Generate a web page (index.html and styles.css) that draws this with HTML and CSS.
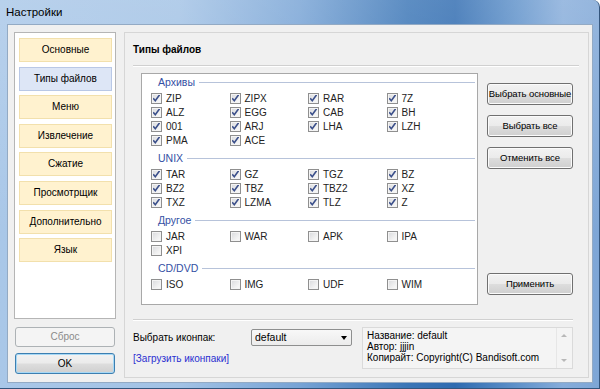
FILE: index.html
```html
<!DOCTYPE html>
<html lang="ru">
<head>
  <meta charset="UTF-8">
  <title>Настройки</title>
  <link rel="stylesheet" href="styles.css">
</head>
<body>
  <div class="window">
    <div class="titlebar">Настройки</div>

    <div class="client">
      <!-- Колонка навигации -->
      <aside class="sidebar">
        <nav class="nav">
          <div class="nav-item">Основные</div>
          <div class="nav-item active">Типы файлов</div>
          <div class="nav-item">Меню</div>
          <div class="nav-item">Извлечение</div>
          <div class="nav-item">Сжатие</div>
          <div class="nav-item">Просмотрщик</div>
          <div class="nav-item">Дополнительно</div>
          <div class="nav-item">Язык</div>
        </nav>
        <div class="btn btn-side disabled">Сброс</div>
        <div class="btn btn-side default">OK</div>
      </aside>

      <!-- Основная панель -->
      <section class="panel">
        <h2 class="panel-title">Типы файлов</h2>
        <div class="sep sep-top"></div>

        <div class="content">
          <div class="types">
            <div class="group">
              <div class="group-head"><span>Архивы</span></div>
              <div class="grid">
                <label class="cb on"><i></i>ZIP</label>
                <label class="cb on"><i></i>ZIPX</label>
                <label class="cb on"><i></i>RAR</label>
                <label class="cb on"><i></i>7Z</label>
                <label class="cb on"><i></i>ALZ</label>
                <label class="cb on"><i></i>EGG</label>
                <label class="cb on"><i></i>CAB</label>
                <label class="cb on"><i></i>BH</label>
                <label class="cb on"><i></i>001</label>
                <label class="cb on"><i></i>ARJ</label>
                <label class="cb on"><i></i>LHA</label>
                <label class="cb on"><i></i>LZH</label>
                <label class="cb on"><i></i>PMA</label>
                <label class="cb on"><i></i>ACE</label>
              </div>
            </div>

            <div class="group">
              <div class="group-head"><span>UNIX</span></div>
              <div class="grid">
                <label class="cb on"><i></i>TAR</label>
                <label class="cb on"><i></i>GZ</label>
                <label class="cb on"><i></i>TGZ</label>
                <label class="cb on"><i></i>BZ</label>
                <label class="cb on"><i></i>BZ2</label>
                <label class="cb on"><i></i>TBZ</label>
                <label class="cb on"><i></i>TBZ2</label>
                <label class="cb on"><i></i>XZ</label>
                <label class="cb on"><i></i>TXZ</label>
                <label class="cb on"><i></i>LZMA</label>
                <label class="cb on"><i></i>TLZ</label>
                <label class="cb on"><i></i>Z</label>
              </div>
            </div>

            <div class="group">
              <div class="group-head"><span>Другое</span></div>
              <div class="grid">
                <label class="cb"><i></i>JAR</label>
                <label class="cb"><i></i>WAR</label>
                <label class="cb"><i></i>APK</label>
                <label class="cb"><i></i>IPA</label>
                <label class="cb"><i></i>XPI</label>
              </div>
            </div>

            <div class="group">
              <div class="group-head"><span>CD/DVD</span></div>
              <div class="grid">
                <label class="cb"><i></i>ISO</label>
                <label class="cb"><i></i>IMG</label>
                <label class="cb"><i></i>UDF</label>
                <label class="cb"><i></i>WIM</label>
              </div>
            </div>
          </div>

          <div class="actions">
            <div class="btn">Выбрать основные</div>
            <div class="btn">Выбрать все</div>
            <div class="btn">Отменить все</div>
            <div class="btn apply">Применить</div>
          </div>
        </div>

        <div class="sep sep-bottom"></div>

        <div class="iconpack">
          <div class="iconpack-left">
            <div class="iconpack-row">
              <span class="iconpack-label">Выбрать иконпак:</span>
              <div class="select">default<span class="arrow"></span></div>
            </div>
            <a class="link" href="#">[Загрузить иконпаки]</a>
          </div>
          <div class="info">
            <div class="info-text">
              <div>Название: default</div>
              <div>Автор: jjjin</div>
              <div>Копирайт: Copyright(C) Bandisoft.com</div>
            </div>
            <div class="scroll">
              <span class="up"></span>
              <span class="down"></span>
            </div>
          </div>
        </div>
      </section>
    </div>
  </div>
</body>
</html>
```

FILE: styles.css
```css
/* Общие стили */
* {
  box-sizing: border-box;
}

body {
  margin: 0;
  padding: 0;
  font-family: "Liberation Sans", Arial, sans-serif;
  font-size: 10px;
  color: #000;
  background: #fff;
}

/* Рамка окна Windows 7 */
.window {
  width: 600px;
  height: 389px;
  display: flex;
  flex-direction: column;
  border-top-right-radius: 7px;
  border-right: 1px solid #34557c;
  border-bottom: 1px solid #34557c;
  background:
    linear-gradient(180deg, rgba(255, 255, 255, 0.18) 0%, rgba(255, 255, 255, 0) 60%),
    linear-gradient(90deg, #a9c7e8 0%, #a2c2e5 30%, #77a3d5 50%, #3a75b6 68%, #2f6bb0 76%, #5d90c9 86%, #86acda 94%, #7ea6d6 100%);
}

.titlebar {
  height: 24px;
  padding-left: 6px;
  line-height: 24px;
  font-size: 11.5px;
  color: #000;
}

.client {
  flex: 1;
  display: flex;
  gap: 8px;
  margin: 0 6px 5px 7px;
  padding: 7px 4px 4px 6px;
  border: 1px solid #93aac4;
  background-color: #f0f0f0;
}

/* Навигация */
.sidebar {
  width: 102px;
  display: flex;
  flex-direction: column;
  align-items: center;
}

.nav {
  width: 102px;
  height: 287px;
  padding: 5px 0 0 4px;
  display: flex;
  flex-direction: column;
  gap: 4.6px;
  background-color: #fff;
  border: 1px solid #b5b5b5;
}

.nav-item {
  width: 93px;
  height: 24px;
  line-height: 22px;
  text-align: center;
  background-color: #fff2cf;
  border: 1px solid #f2e0ac;
}

.nav-item.active {
  background-color: #dde6f6;
  border-color: #b9c8e6;
}

/* Кнопки */
.btn {
  height: 22px;
  line-height: 20px;
  text-align: center;
  white-space: nowrap;
  border: 1px solid #707070;
  border-radius: 3px;
  background: linear-gradient(180deg, #f2f2f2 0%, #ebebeb 48%, #dddddd 52%, #cfcfcf 100%);
  box-shadow: inset 0 0 0 1px #fbfbfb;
}

.btn-side {
  width: 100px;
}

.btn-side.disabled {
  margin-top: 8px;
  height: 20px;
  line-height: 18px;
  color: #8a8a8a;
  border-color: #adb2b5;
  background: #f4f4f4;
  box-shadow: none;
}

.btn-side.default {
  margin-top: 6px;
  height: 21px;
  line-height: 19px;
  border-color: #3c7fb1;
  box-shadow: inset 0 0 0 1px #a7d8f5;
}

/* Панель */
.panel {
  flex: 1;
  display: flex;
  flex-direction: column;
  padding: 0 9px 0 8px;
  border: 1px solid #d6d6d6;
}

.panel-title {
  margin: 11px 0 0 0;
  font-size: 10px;
  line-height: 12px;
  font-weight: bold;
}

.sep {
  height: 2px;
  border-top: 1px solid #d0d0d0;
  border-bottom: 1px solid #fff;
}

.sep-top {
  margin-top: 9px;
}

.sep-bottom {
  margin: 14px 6px 0 0;
}

.content {
  display: flex;
  margin: 6px 5px 0 8px;
}

/* Список типов файлов */
.types {
  width: 337px;
  height: 232px;
  padding: 2px 2px 0 9px;
  background-color: #fff;
  border: 1px solid #a8a8a8;
}

.group {
  margin-bottom: 5px;
}

.group-head {
  display: flex;
  align-items: center;
  gap: 4px;
  height: 12px;
  margin: 0 0 3px 7px;
  color: #3450a4;
  font-size: 10.5px;
}

.group-head::after {
  content: "";
  flex: 1;
  height: 1px;
  background-color: #b7c3da;
}

.grid {
  display: grid;
  grid-template-columns: repeat(4, 78.5px);
  grid-auto-rows: 14px;
}

.cb {
  display: flex;
  align-items: center;
  gap: 4px;
  color: #222;
}

.cb i {
  width: 11px;
  height: 11px;
  border: 1px solid #8f8f8f;
  background: linear-gradient(135deg, #d8d9dc 0%, #f3f3f3 70%, #fafafa 100%);
  box-shadow: inset 0 0 0 1px #f4f4f4;
}

.cb.on i {
  background:
    url("data:image/svg+xml,%3Csvg xmlns='http://www.w3.org/2000/svg' width='11' height='11'%3E%3Cpath d='M2.2 5.2 L4.3 7.8 L8.6 1.8' fill='none' stroke='%233b4f8a' stroke-width='1.6'/%3E%3C/svg%3E") center / 11px 11px no-repeat,
    linear-gradient(135deg, #d8d9dc 0%, #f3f3f3 70%, #fafafa 100%);
}

/* Кнопки справа */
.actions {
  width: 86px;
  margin-left: 9px;
  padding: 10px 0;
  display: flex;
  flex-direction: column;
  gap: 10px;
}

.actions .btn {
  font-size: 9.5px;
  letter-spacing: -0.1px;
}

.actions .apply {
  margin-top: auto;
}

/* Иконпак */
.iconpack {
  display: flex;
  margin: 6px 6px 0 0;
}

.iconpack-left {
  width: 229px;
}

.iconpack-row {
  display: flex;
  align-items: center;
  height: 18px;
  margin-top: 1px;
}

.iconpack-label {
  width: 118px;
}

.select {
  position: relative;
  width: 101px;
  height: 17px;
  line-height: 15px;
  padding-left: 3px;
  font-size: 10.5px;
  border: 1px solid #8e8f8f;
  border-radius: 2px;
  background: linear-gradient(180deg, #f8f8f8 0%, #ececec 100%);
}

.arrow {
  position: absolute;
  right: 4px;
  top: 6px;
  border-left: 3.5px solid transparent;
  border-right: 3.5px solid transparent;
  border-top: 4px solid #000;
}

.link {
  display: block;
  margin-top: 7px;
  color: #2a2fd0;
  text-decoration: none;
}

.info {
  display: flex;
  width: 211px;
  height: 42px;
  border: 1px solid #dadada;
  background-color: #f4f4f4;
}

.info-text {
  flex: 1;
  padding: 2px 0 0 4px;
  line-height: 11px;
}

.scroll {
  width: 16px;
  position: relative;
  border-left: 1px solid #e6e6e6;
}

.scroll .up,
.scroll .down {
  position: absolute;
  left: 4px;
  border-left: 3px solid transparent;
  border-right: 3px solid transparent;
}

.scroll .up {
  top: 6px;
  border-bottom: 3px solid #b8b8b8;
}

.scroll .down {
  bottom: 6px;
  border-top: 3px solid #b8b8b8;
}
```
